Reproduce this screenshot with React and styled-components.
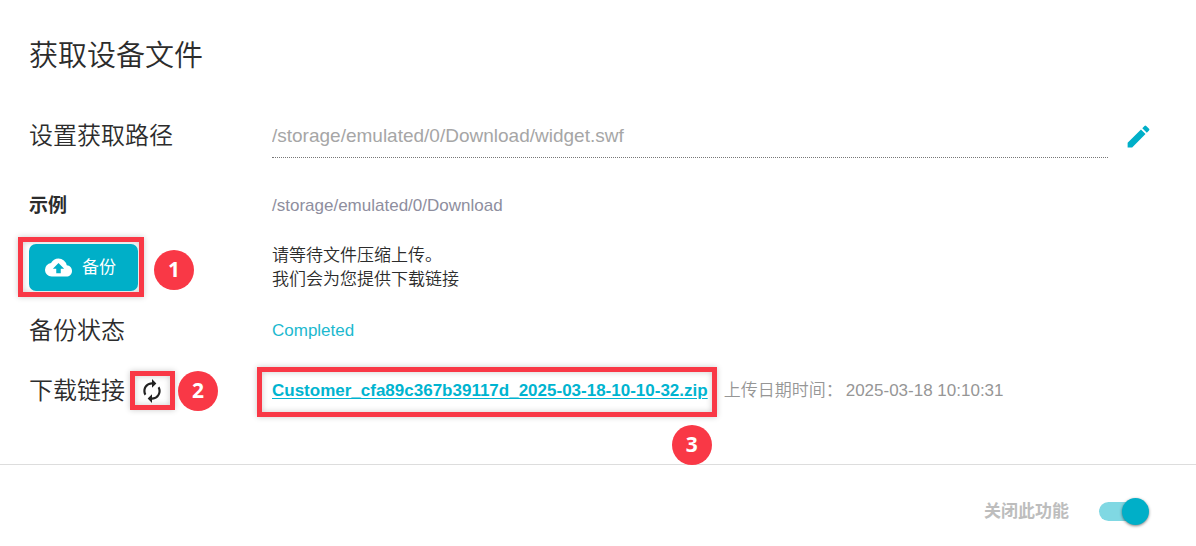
import React, { useState } from "react";
import styled, { createGlobalStyle } from "styled-components";
import { MdAutorenew, MdCloudUpload } from "react-icons/md";

const accent = "#00afc8";
const alert = "#f93846";

const GlobalStyle = createGlobalStyle`
  *, *::before, *::after { box-sizing: border-box; }
  body {
    margin: 0;
    background: #fff;
    color: #2c2c2c;
    font-family: "Liberation Sans", "Noto Sans CJK SC", sans-serif;
    font-size: 17px;
    line-height: 24px;
  }
`;

const Content = styled.main`
  padding: 34px 43px 43px 29px;
  border-bottom: 1px solid #ddd;
`;

const Title = styled.h1`
  margin: 0 0 28px;
  font-size: 29px;
  line-height: 44px;
  font-weight: 350;
`;

const Row = styled.div`
  display: grid;
  grid-template-columns: 243px minmax(0, 1fr);
  align-items: center;
  min-height: 60px;
`;

const ExampleRow = styled(Row)`
  margin: 10px 0 2px;
`;

const BackupRow = styled(Row)`
  min-height: 59px;
  margin-bottom: 4px;
`;

const Label = styled.div`
  display: flex;
  align-items: center;
  gap: 14px;
  font-size: 24px;
  line-height: 36px;
  font-weight: 350;
`;

const ExampleLabel = styled.strong`
  font-size: 19px;
`;

const PathField = styled.div`
  display: flex;
  align-items: center;
  gap: 16px;
`;

const PathInput = styled.input`
  flex: 1;
  min-width: 0;
  height: 44px;
  padding: 0;
  border: 0;
  border-bottom: 1px dotted #777;
  outline: 0;
  background: transparent;
  color: #a6a6a6;
  font: inherit;
  font-size: 19px;
`;

const IconButton = styled.button`
  display: flex;
  padding: 0;
  border: 0;
  background: none;
  color: ${(p) => p.$color};
  font-size: ${(p) => p.$size}px;
  cursor: pointer;
`;

const Example = styled.span`
  color: #8e8e9e;
`;

const Marked = styled.div`
  position: relative;
  display: flex;
  justify-self: start;
`;

const Highlight = styled.span`
  position: absolute;
  inset: ${(p) => p.$inset};
  border: 5px solid ${alert};
  box-shadow: 0 0 6px rgba(0, 0, 0, 0.2), inset 0 0 6px rgba(0, 0, 0, 0.2);
  pointer-events: none;
`;

const Badge = styled.span`
  position: absolute;
  left: ${(p) => p.$left};
  top: ${(p) => p.$top};
  width: 40px;
  height: 40px;
  border-radius: 50%;
  background: ${alert};
  color: #fff;
  font: 700 21px/38px "Noto Sans", sans-serif;
  text-align: center;
`;

const BackupButton = styled.button`
  position: relative;
  z-index: 1;
  display: flex;
  align-items: center;
  gap: 10px;
  height: 47px;
  padding: 0 22px 0 16px;
  border: 0;
  border-radius: 7px;
  background: ${accent};
  color: #fff;
  font: inherit;
  cursor: pointer;

  svg { font-size: 27px; }
`;

const Hint = styled.p`
  margin: 0;
  font-weight: 350;
`;

const Status = styled.span`
  color: #1cb9cf;
`;

const Download = styled.div`
  display: flex;
  align-items: center;
  gap: 16px;
`;

const FileLink = styled.a`
  color: #00b4d0;
  font-weight: 700;
  text-underline-offset: 2px;
`;

const Uploaded = styled.span`
  display: flex;
  gap: 3px;
  color: #969696;
  font-weight: 350;
`;

const Footer = styled.footer`
  display: flex;
  justify-content: flex-end;
  padding: 33px 47px 20px;
`;

const SwitchLabel = styled.label`
  display: flex;
  align-items: center;
  gap: 30px;
  color: #bdbdbd;
  font-weight: 700;
  cursor: pointer;
`;

const Switch = styled.input`
  position: relative;
  appearance: none;
  width: 50px;
  height: 28px;
  margin: 0;
  cursor: pointer;

  &::before {
    content: "";
    position: absolute;
    inset: 4px 3px 5px 0;
    border-radius: 10px;
    background: #bbb;
  }
  &::after {
    content: "";
    position: absolute;
    top: 0;
    left: 0;
    width: 27px;
    height: 27px;
    border-radius: 50%;
    background: #fafafa;
    box-shadow: 0 1px 3px rgba(0, 0, 0, 0.5);
  }
  &:checked::before { background: #80d8e3; }
  &:checked::after { left: 23px; background: ${accent}; }
`;

function PencilIcon() {
  return (
    <svg width="1em" height="1em" viewBox="0 0 24 24" fill="currentColor" aria-hidden="true">
      <path d="M3 17.25V21h3.75L17.81 9.94l-3.75-3.75L3 17.25zM20.71 7.04a1 1 0 0 0 0-1.41l-2.34-2.34a1 1 0 0 0-1.41 0l-1.83 1.83 3.75 3.75 1.83-1.83z" />
    </svg>
  );
}

export default function App() {
  const [enabled, setEnabled] = useState(true);

  return (
    <>
      <GlobalStyle />
      <Content>
        <Title>获取设备文件</Title>
        <Row>
          <Label as="label" htmlFor="path">设置获取路径</Label>
          <PathField>
            <PathInput id="path" readOnly value="/storage/emulated/0/Download/widget.swf" />
            <IconButton $color={accent} $size={29} aria-label="编辑"><PencilIcon /></IconButton>
          </PathField>
        </Row>
        <ExampleRow>
          <ExampleLabel>示例</ExampleLabel>
          <Example>/storage/emulated/0/Download</Example>
        </ExampleRow>
        <BackupRow>
          <Marked>
            <BackupButton><MdCloudUpload />备份</BackupButton>
            <Highlight $inset="-7px -6px -6px -11px" />
            <Badge $left="125px" $top="6px">1</Badge>
          </Marked>
          <Hint>请等待文件压缩上传。<br />我们会为您提供下载链接</Hint>
        </BackupRow>
        <Row>
          <Label>备份状态</Label>
          <Status>Completed</Status>
        </Row>
        <Row>
          <Label>
            下载链接
            <Marked>
              <IconButton $color="#222" $size={26} aria-label="刷新"><MdAutorenew /></IconButton>
              <Highlight $inset="-7px -10px -6px -9px" />
              <Badge $left="39px" $top="-7px">2</Badge>
            </Marked>
          </Label>
          <Download>
            <Marked>
              <FileLink href="#download">Customer_cfa89c367b39117d_2025-03-18-10-10-32.zip</FileLink>
              <Highlight $inset="-12px -9px -14px -15px" />
              <Badge $left="calc(100% - 36px)" $top="46px">3</Badge>
            </Marked>
            <Uploaded><span>上传日期时间：</span><time>2025-03-18 10:10:31</time></Uploaded>
          </Download>
        </Row>
      </Content>
      <Footer>
        <SwitchLabel>
          关闭此功能
          <Switch type="checkbox" role="switch" checked={enabled} onChange={(e) => setEnabled(e.target.checked)} />
        </SwitchLabel>
      </Footer>
    </>
  );
}
